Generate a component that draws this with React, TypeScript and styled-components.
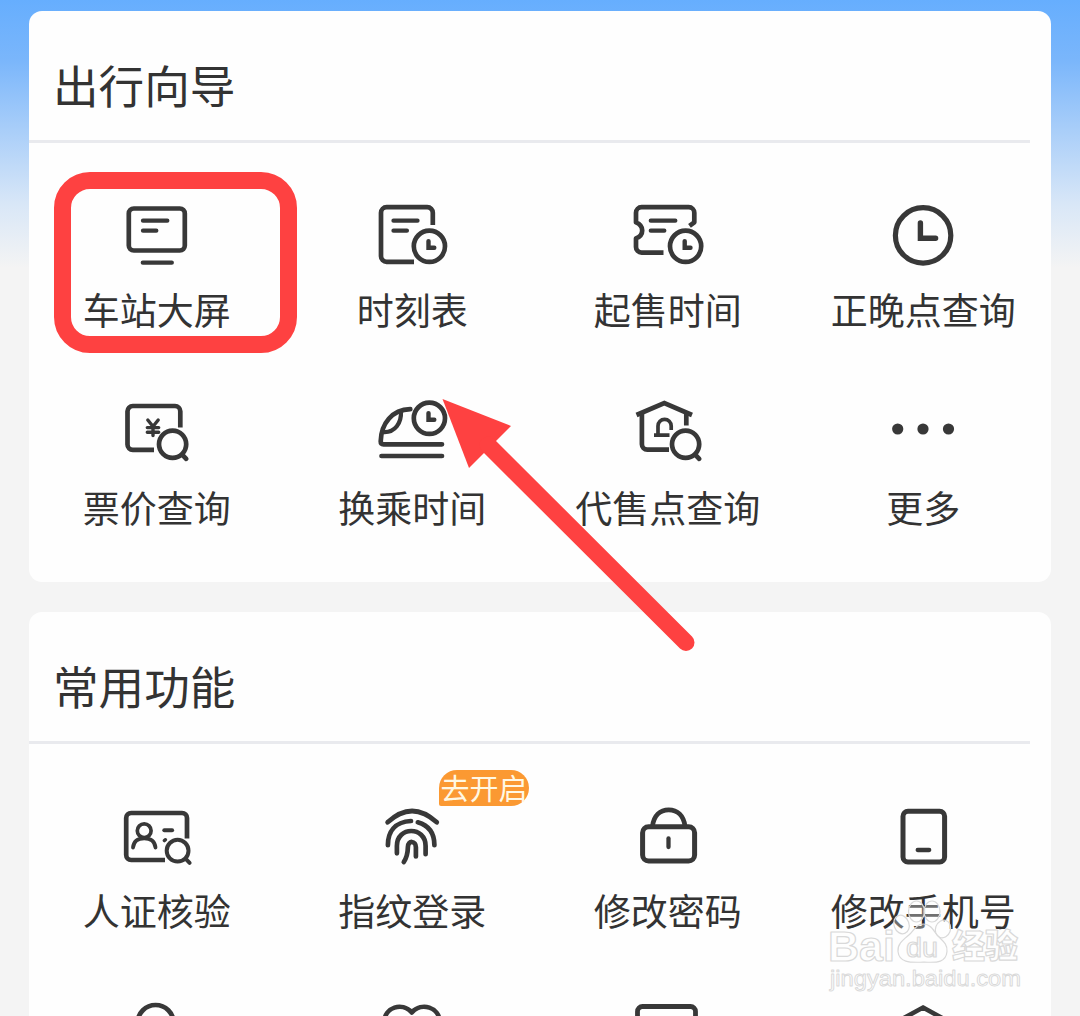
import React from "react";
import styled, { createGlobalStyle } from "styled-components";

const GlobalStyle = createGlobalStyle`
  * { box-sizing: border-box; }
  html, body { margin: 0; padding: 0; }
  body {
    background: #f4f4f4;
    color: #333;
    font-family: "Noto Sans CJK SC", "Noto Sans", sans-serif;
  }
`;

const Page = styled.main`
  position: relative;
  width: 1080px;
  height: 1016px;
  overflow: hidden;
  padding: 11px 29px 0;
  display: flex;
  flex-direction: column;
  gap: 30px;
  background: linear-gradient(180deg, #66aefe 0, #7ab6fb 60px, #a9cef9 130px, #d9e7f7 205px, #f4f4f4 268px);
`;

const Card = styled.section`
  flex: none;
  height: 571px;
  border-radius: 13px;
  background: #fefefe;
`;

const CardHeader = styled.header`
  display: flex;
  align-items: center;
  height: 132px;
  margin-right: 21px;
  padding: 16px 0 0 24px;
  border-bottom: 3px solid #e9eaee;
`;

const Title = styled.h2`
  margin: 0;
  font-size: 45.6px;
  font-weight: 400;
  line-height: 66px;
`;

const Grid = styled.div`
  display: grid;
  grid-template-columns: repeat(4, 1fr);
  row-gap: 66px;
  padding-top: 57px;
`;

const Item = styled.div`
  position: relative;
  display: flex;
  flex-direction: column;
  align-items: center;
  gap: 17px;
  height: 132px;
`;

const IconSvg = styled.svg`
  width: 80px;
  height: 72px;
  overflow: visible;
  fill: none;
  stroke: #383838;
  stroke-width: 4.7px;
  stroke-linecap: round;
  stroke-linejoin: round;
`;

const Label = styled.span`
  font-size: 37px;
  line-height: 40px;
  white-space: nowrap;
`;

const Badge = styled.span`
  position: absolute;
  left: 154.5px;
  top: -31px;
  width: 90px;
  height: 36px;
  border-radius: 18px 18px 18px 2px;
  background: #fb9932;
  color: #fff8e4;
  font-size: 29px;
  line-height: 35px;
  text-align: center;
  white-space: nowrap;
`;

const Highlight = styled.div`
  position: absolute;
  left: 54px;
  top: 172px;
  width: 243px;
  height: 181px;
  border: 17px solid #fe4141;
  border-radius: 36px;
`;

const Overlay = styled.svg`
  position: absolute;
  left: 0;
  top: 0;
  width: 1080px;
  height: 1016px;
  pointer-events: none;
`;

const Clock = ({ cx, cy }: { cx: number; cy: number }) => (
  <>
    <circle cx={cx} cy={cy} r="15.6" />
    <path d={`M${cx - 0.9} ${cy - 5.2}v6.6h5.8`} strokeLinejoin="miter" strokeWidth="4.4" />
  </>
);

const Lens = ({ cx, cy }: { cx: number; cy: number }) => (
  <>
    <circle cx={cx} cy={cy} r="13.6" />
    <path d={`M${cx + 9.8} ${cy + 10.5}l3.8 4`} />
  </>
);

const icons = {
  screen: (
    <>
      <rect x="11.8" y="8.5" width="56" height="42" rx="5" />
      <path d="M26 20.7h24.3M26 30.7h13.3M25.8 62.7h29" strokeWidth="4.3" />
    </>
  ),
  timetable: (
    <>
      <path d="M60.8 25V13a5.6 5.6 0 0 0-5.6-5.8H14.6A5.6 5.6 0 0 0 9 12.8v43.4a5.6 5.6 0 0 0 5.6 5.6H42" strokeLinecap="butt" />
      <path d="M21.5 20.7h24M21.5 30.7h13.4" strokeWidth="4.3" />
      <Clock cx={57.4} cy={46.3} />
    </>
  ),
  ticket: (
    <>
      <path d="M61.500 25.800L66.300 22.300V12.800a5.600 5.600 0 0 0-5.600-5.600H13.600A5.600 5.600 0 0 0 8 12.800V22.400c3.900 1.600 6.200 4.400 6.200 8s-2.300 6.400-6.200 8v8.500a5.600 5.600 0 0 0 5.600 5.700H35.5" strokeLinecap="butt" />
      <path d="M22.800 20.700h24.500M22.800 30.700h13.500" strokeWidth="4.3" />
      <Clock cx={57.6} cy={46.3} />
    </>
  ),
  clock: (
    <>
      <circle cx="40.100" cy="35.400" r="27.700" strokeWidth="5.200" />
      <path d="M37.400 23V38.200H52.600" strokeWidth="5.400" strokeLinejoin="miter" />
    </>
  ),
  price: (
    <>
      <path d="M63.300 29.500V13.300a5.300 5.300 0 0 0-5.300-5.300H15.800a5.300 5.300 0 0 0-5.300 5.300v33.200a5.300 5.300 0 0 0 5.300 5.300H37" strokeLinecap="butt" />
      <path d="M30.800 22l5.200 6.500 5.200-6.500M36 28.500V37.500M30.300 29.600h11.400M30.300 34.200h11.400" strokeWidth="3.400" />
      <Lens cx={55.6} cy={46.3} />
    </>
  ),
  train: (
    <>
      <path d="M38.300 11.200C20 11.700 9.200 25.500 8.700 43.300c0 2 1 3 2.800 3H70M9.500 58H70" />
      <path d="M29 13.500C29.500 25 23 34.500 12 34.200" strokeWidth="4.200" />
      <Clock cx={57.4} cy={20.3} />
    </>
  ),
  house: (
    <>
      <path d="M8.500 17L36.300 5 64 17" strokeLinecap="butt" strokeLinejoin="miter" />
      <path d="M13.900 15v31.300a5.400 5.400 0 0 0 5.400 5.400H41M58.300 16V27.500" strokeLinecap="butt" />
      <path d="M26 37.200H41.500M30 37V27.900a6.600 6.600 0 0 1 13.200 0V32" strokeWidth="3.700" strokeLinecap="butt" />
      <Lens cx={57.6} cy={46.3} />
    </>
  ),
  more: (
    <g fill="#383838" stroke="none">
      <circle cx="14.700" cy="31" r="5.600" />
      <circle cx="40" cy="31" r="5.600" />
      <circle cx="65.500" cy="31" r="5.600" />
    </g>
  ),
  identity: (
    <>
      <path d="M70 37.500V17a5 5 0 0 0-5-5H14.200a5 5 0 0 0-5 5v37a5 5 0 0 0 5 5H48" strokeLinecap="butt" />
      <circle cx="27.200" cy="29.800" r="6.900" strokeWidth="3.700" />
      <path d="M16 46.500c.6-6 4.800-9.200 11.200-9.200s10.700 3.200 11.300 9.200" strokeWidth="3.800" />
      <path d="M47.300 29.300h7.800" strokeWidth="4" />
      <path d="M47.300 39.600l1.200-.9" strokeWidth="3.400" />
      <circle cx="60.600" cy="49.700" r="10.900" strokeWidth="4" />
      <path d="M69 58.200l3.600 3.700" strokeWidth="4" />
    </>
  ),
  fingerprint: (
    <path d="M15.600 21.300Q40-1.400 64.800 21.300M15.900 44.200C15.900 31 22.500 20.800 39 20M45.800 21.300C57 24.500 62.400 32 62.400 44.200M24.900 52.300V45c0-20 28.700-20 28.700 0v8.200M31.800 61c3-4.500 4-9 4.100-15 .1-7 8.100-6.500 8 .3V55.500" strokeWidth="4.700" />
  ),
  lock: (
    <>
      <rect x="14.600" y="25.700" width="52" height="34.300" rx="6" strokeWidth="5" />
      <path d="M24.500 25C26 14.500 32 8.900 40.700 8.900S55.500 14.500 57 25" strokeLinecap="butt" />
      <path d="M40.500 37.500v8.500" strokeWidth="4.300" />
    </>
  ),
  phone: (
    <>
      <rect x="20" y="10.200" width="41.600" height="50.800" rx="5" strokeWidth="5" />
      <path d="M34.700 49H46.200" strokeWidth="4.300" />
    </>
  ),
  person: <circle cx="38.600" cy="24" r="18" />,
  heart: <path d="M39.800 56C25 44 12.500 33 12.500 22.500 12.500 8.500 30 2.500 39.800 13.500 49.600 2.500 67.500 8.500 67.500 22.500 67.500 33 55 44 39.800 56Z" />,
  panel: <rect x="9.500" y="7.500" width="58" height="48" rx="5" strokeWidth="4.800" />,
  hexagon: <path d="M40 8.500L64 21.700V48L40 61 16 48V21.700Z" strokeWidth="4.600" strokeLinejoin="miter" />,
};

type IconName = keyof typeof icons;
type Entry = { icon: IconName; label?: string; badge?: string };

const sections: { title: string; entries: Entry[] }[] = [
  {
    title: "出行向导",
    entries: [
      { icon: "screen", label: "车站大屏" },
      { icon: "timetable", label: "时刻表" },
      { icon: "ticket", label: "起售时间" },
      { icon: "clock", label: "正晚点查询" },
      { icon: "price", label: "票价查询" },
      { icon: "train", label: "换乘时间" },
      { icon: "house", label: "代售点查询" },
      { icon: "more", label: "更多" },
    ],
  },
  {
    title: "常用功能",
    entries: [
      { icon: "identity", label: "人证核验" },
      { icon: "fingerprint", label: "指纹登录", badge: "去开启" },
      { icon: "lock", label: "修改密码" },
      { icon: "phone", label: "修改手机号" },
      { icon: "person" },
      { icon: "heart" },
      { icon: "panel" },
      { icon: "hexagon" },
    ],
  },
];

const Arrow = () => (
  <g fill="#fe4141">
    <path d="M442.500 399L511 426 496.500 440.500 484 453 469 468Z" />
    <path d="M488 445L686 642.500" stroke="#fe4141" strokeWidth="17" strokeLinecap="round" />
  </g>
);

const Watermark = () => (
  <g
    fill="#fff"
    fillOpacity=".3"
    stroke="#d9d9d9"
    strokeWidth="1.200"
    strokeLinejoin="round"
    fontFamily='"Liberation Sans", "Noto Sans CJK SC", sans-serif'
  >
    <ellipse cx="901.500" cy="924.500" rx="7.500" ry="9.500" transform="rotate(-20 901.500 924.500)" />
    <ellipse cx="916.500" cy="911.500" rx="8" ry="10.500" />
    <ellipse cx="932" cy="911.500" rx="8" ry="10.500" />
    <ellipse cx="943" cy="929" rx="7.500" ry="9" transform="rotate(20 943 929)" />
    <path d="M923.500 924c6 0 9 4 12 9 4 6 12.500 9.500 11.500 18.500-1 10.500-9 11.500-23 10.500-15 1-25 0-26-10.500-1-9 8-13.500 13-18.500 4-5 6.500-9 12.500-9Z" />
    <text x="828" y="961" fontSize="43" fontWeight="700" textLength="67" lengthAdjust="spacingAndGlyphs">Bai</text>
    <text x="906" y="957" fontSize="27" fontWeight="400" textLength="32" lengthAdjust="spacingAndGlyphs">du</text>
    <text x="952" y="958" fontSize="33" fontWeight="900">经验</text>
    <text x="830" y="986" fontSize="22" fontWeight="400" textLength="191" lengthAdjust="spacingAndGlyphs" strokeWidth=".9">
      jingyan.baidu.com
    </text>
  </g>
);

export default function App() {
  return (
    <>
      <GlobalStyle />
      <Page>
        {sections.map((section) => (
          <Card key={section.title}>
            <CardHeader>
              <Title>{section.title}</Title>
            </CardHeader>
            <Grid>
              {section.entries.map((entry) => (
                <Item key={entry.icon}>
                  <IconSvg viewBox="0 0 80 72" aria-hidden="true">{icons[entry.icon]}</IconSvg>
                  {entry.label && <Label>{entry.label}</Label>}
                  {entry.badge && <Badge>{entry.badge}</Badge>}
                </Item>
              ))}
            </Grid>
          </Card>
        ))}
        <Highlight />
        <Overlay viewBox="0 0 1080 1016">
          <Arrow />
          <Watermark />
        </Overlay>
      </Page>
    </>
  );
}
